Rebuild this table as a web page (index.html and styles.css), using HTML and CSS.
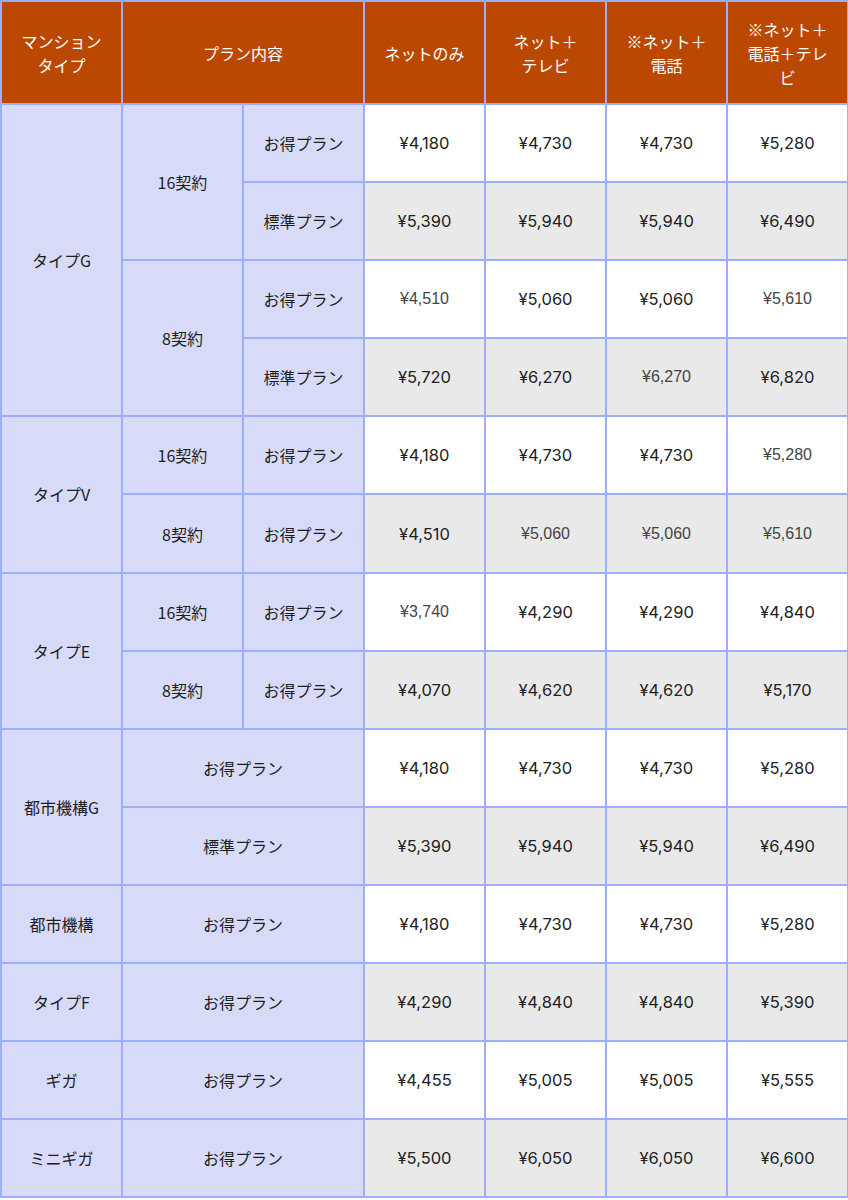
FILE: index.html
```html
<!DOCTYPE html>
<html lang="ja">
<head>
<meta charset="utf-8">
<link rel="stylesheet" href="styles.css">
</head>
<body>
<table class="price">
<colgroup>
<col class="c"><col class="c"><col class="c"><col class="c"><col class="c"><col class="c"><col class="c">
</colgroup>
<thead>
<tr class="head">
<th>マンション<br>タイプ</th>
<th colspan="2">プラン内容</th>
<th>ネットのみ</th>
<th>ネット＋<br>テレビ</th>
<th>※ネット＋<br>電話</th>
<th>※ネット＋<br>電話＋テレ<br>ビ</th>
</tr>
</thead>
<tbody>
<tr class="w">
<td class="lab" rowspan="4">タイプG</td>
<td class="lab" rowspan="2">16契約</td>
<td class="lab">お得プラン</td>
<td>¥4,180</td><td>¥4,730</td><td>¥4,730</td><td>¥5,280</td>
</tr>
<tr class="g">
<td class="lab">標準プラン</td>
<td>¥5,390</td><td>¥5,940</td><td>¥5,940</td><td>¥6,490</td>
</tr>
<tr class="w">
<td class="lab" rowspan="2">8契約</td>
<td class="lab">お得プラン</td>
<td class="alt">¥4,510</td><td>¥5,060</td><td>¥5,060</td><td class="alt">¥5,610</td>
</tr>
<tr class="g">
<td class="lab">標準プラン</td>
<td>¥5,720</td><td>¥6,270</td><td class="alt">¥6,270</td><td>¥6,820</td>
</tr>
<tr class="w">
<td class="lab" rowspan="2">タイプV</td>
<td class="lab">16契約</td>
<td class="lab">お得プラン</td>
<td>¥4,180</td><td>¥4,730</td><td>¥4,730</td><td class="alt">¥5,280</td>
</tr>
<tr class="g">
<td class="lab">8契約</td>
<td class="lab">お得プラン</td>
<td>¥4,510</td><td class="alt">¥5,060</td><td class="alt">¥5,060</td><td class="alt">¥5,610</td>
</tr>
<tr class="w">
<td class="lab" rowspan="2">タイプE</td>
<td class="lab">16契約</td>
<td class="lab">お得プラン</td>
<td class="alt">¥3,740</td><td>¥4,290</td><td>¥4,290</td><td>¥4,840</td>
</tr>
<tr class="g">
<td class="lab">8契約</td>
<td class="lab">お得プラン</td>
<td>¥4,070</td><td>¥4,620</td><td>¥4,620</td><td>¥5,170</td>
</tr>
<tr class="w">
<td class="lab" rowspan="2">都市機構G</td>
<td class="lab" colspan="2">お得プラン</td>
<td>¥4,180</td><td>¥4,730</td><td>¥4,730</td><td>¥5,280</td>
</tr>
<tr class="g">
<td class="lab" colspan="2">標準プラン</td>
<td>¥5,390</td><td>¥5,940</td><td>¥5,940</td><td>¥6,490</td>
</tr>
<tr class="w">
<td class="lab">都市機構</td>
<td class="lab" colspan="2">お得プラン</td>
<td>¥4,180</td><td>¥4,730</td><td>¥4,730</td><td>¥5,280</td>
</tr>
<tr class="g">
<td class="lab">タイプF</td>
<td class="lab" colspan="2">お得プラン</td>
<td>¥4,290</td><td>¥4,840</td><td>¥4,840</td><td>¥5,390</td>
</tr>
<tr class="w">
<td class="lab">ギガ</td>
<td class="lab" colspan="2">お得プラン</td>
<td>¥4,455</td><td>¥5,005</td><td>¥5,005</td><td>¥5,555</td>
</tr>
<tr class="g">
<td class="lab">ミニギガ</td>
<td class="lab" colspan="2">お得プラン</td>
<td>¥5,500</td><td>¥6,050</td><td>¥6,050</td><td>¥6,600</td>
</tr>
</tbody>
</table>
</body>
</html>
```
FILE: styles.css
```css
html, body {
  margin: 0;
  padding: 0;
  background: #ffffff;
}
.price {
  width: 848px;
  border-collapse: collapse;
  table-layout: fixed;
  font-family: Inter, "Noto Sans CJK JP", sans-serif;
  font-size: 16.5px;
  color: #222222;
}
.price .c {
  width: 121px;
}
.price th,
.price td {
  border: 2px solid #9dadff;
  text-align: center;
  vertical-align: middle;
  padding: 0 8px;
  line-height: 24px;
  font-weight: 400;
}
.head th {
  height: 101px;
  background: #bb4800;
  color: #ffffff;
  font-family: "Noto Sans CJK JP", sans-serif;
  font-size: 16px;
}
.price tbody td {
  height: 76.1px;
}
.w td {
  background: #ffffff;
}
.g td {
  background: #e9e9e9;
}
.price td.lab {
  background: #d7dbf8;
  font-family: "Noto Sans CJK JP", sans-serif;
  font-size: 16px;
  color: #1e1e1e;
}
.price td.alt {
  font-family: "Liberation Sans", Arial, sans-serif;
  font-size: 16px;
  color: #444444;
}
```
